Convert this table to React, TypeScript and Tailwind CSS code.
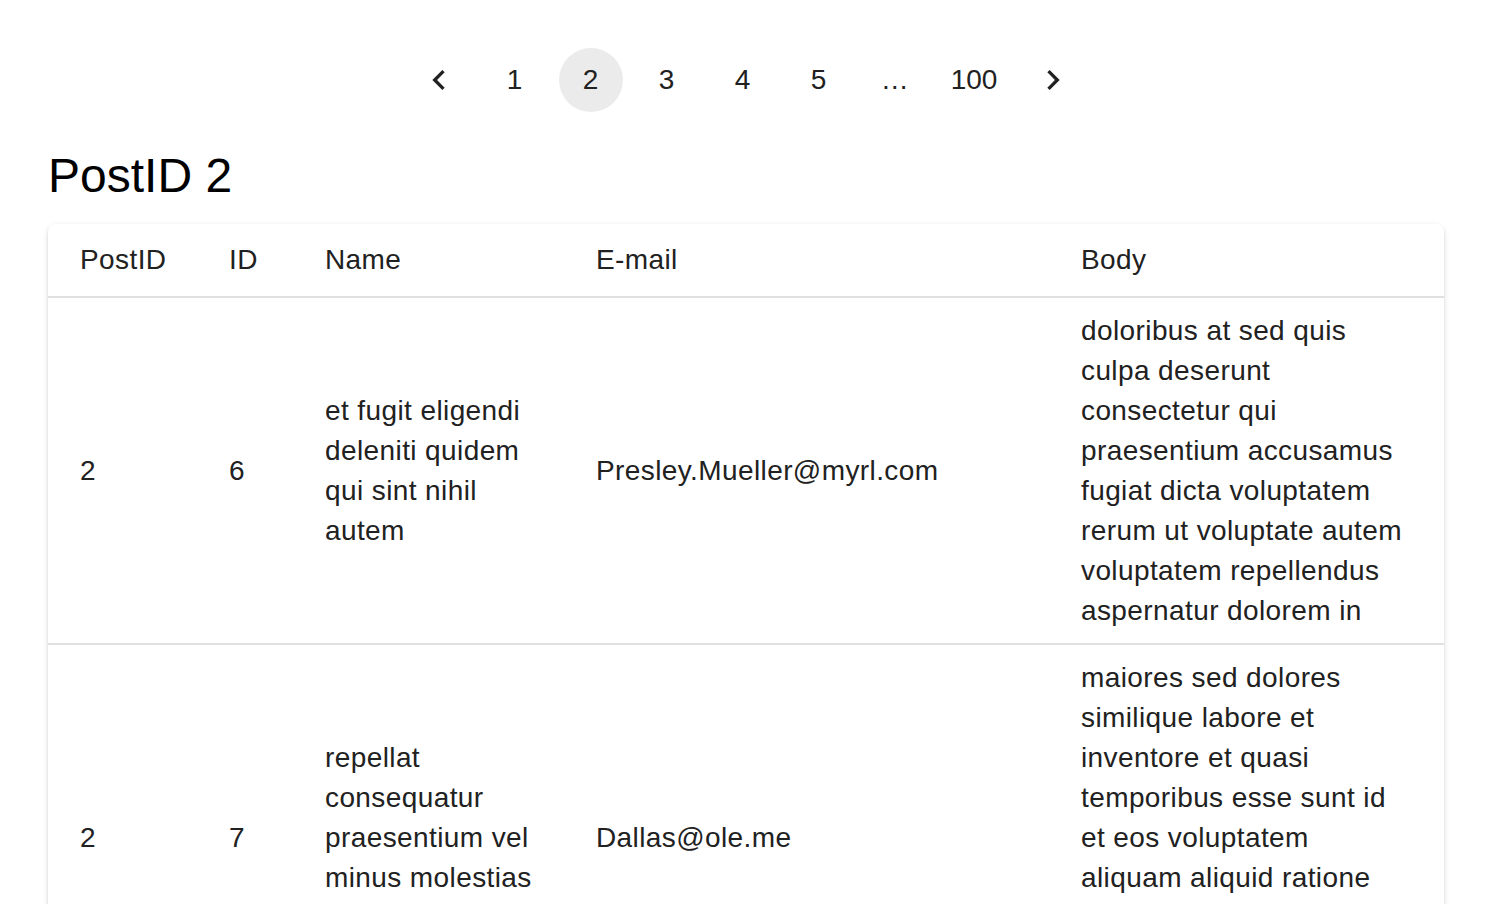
import { useState } from "react";

type Comment = {
  postId: number;
  id: number;
  name: string;
  email: string;
  body: string;
};

const COMMENTS: Comment[] = [
  {
    postId: 2,
    id: 6,
    name: "et fugit eligendi deleniti quidem qui sint nihil autem",
    email: "Presley.Mueller@myrl.com",
    body: "doloribus at sed quis culpa deserunt consectetur qui praesentium accusamus fugiat dicta voluptatem rerum ut voluptate autem voluptatem repellendus aspernatur dolorem in",
  },
  {
    postId: 2,
    id: 7,
    name: "repellat consequatur praesentium vel minus molestias voluptatum",
    email: "Dallas@ole.me",
    body: "maiores sed dolores similique labore et inventore et quasi temporibus esse sunt id et eos voluptatem aliquam aliquid ratione corporis molestiae mollitia quia et magnam dolor",
  },
  {
    postId: 2,
    id: 8,
    name: "et omnis dolorem",
    email: "Mallory_Kunze@marie.org",
    body: "ut voluptatem corrupti velit ad voluptatem maiores et nisi velit vero accusamus maiores voluptates quia aliquid ullam eaque",
  },
  {
    postId: 2,
    id: 9,
    name: "provident id voluptas",
    email: "Meghan_Littel@rene.us",
    body: "sapiente assumenda molestiae atque adipisci laborum distinctio aperiam et ab ut omnis et occaecati aspernatur odit sit rem expedita quas enim ipsam minus",
  },
  {
    postId: 2,
    id: 10,
    name: "eaque et deleniti atque tenetur ut quo ut",
    email: "Carmen_Keeling@caroline.name",
    body: "voluptate iusto quis nobis reprehenderit ipsum amet nulla quia quas dolores velit et ut quibusdam et aut laudantium ut odit",
  },
];

const PAGES: (number | "...")[] = [1, 2, 3, 4, 5, "...", 100];

function Chevron({ dir }: { dir: "left" | "right" }) {
  return (
    <svg viewBox="0 0 24 24" className="w-10 h-10 fill-[#212121]">
      {dir === "left" ? (
        <path d="M15.41 7.41 14 6l-6 6 6 6 1.41-1.41L10.83 12z" />
      ) : (
        <path d="M10 6 8.59 7.41 13.17 12l-4.58 4.59L10 18l6-6z" />
      )}
    </svg>
  );
}

function Pagination({ page, setPage }: { page: number; setPage: (p: number) => void }) {
  return (
    <nav className="flex justify-center">
      <ul className="flex items-center">
        <li>
          <button
            onClick={() => setPage(Math.max(1, page - 1))}
            className="mx-[6px] w-16 h-16 rounded-full flex items-center justify-center"
          >
            <Chevron dir="left" />
          </button>
        </li>
        {PAGES.map((p, i) => (
          <li key={i}>
            {p === "..." ? (
              <div className="mx-[6px] min-w-16 h-16 flex items-center justify-center text-[28px] text-[#212121]">
                …
              </div>
            ) : (
              <button
                onClick={() => setPage(p)}
                className={`mx-[6px] min-w-16 h-16 px-3 rounded-full flex items-center justify-center text-[28px] text-[#212121] ${
                  p === page ? "bg-[#ebebeb]" : ""
                }`}
              >
                {p}
              </button>
            )}
          </li>
        ))}
        <li>
          <button
            onClick={() => setPage(Math.min(100, page + 1))}
            className="mx-[6px] w-16 h-16 rounded-full flex items-center justify-center"
          >
            <Chevron dir="right" />
          </button>
        </li>
      </ul>
    </nav>
  );
}

export default function App() {
  const [page, setPage] = useState(2);

  return (
    <div className="min-h-screen bg-white px-12 pt-12 font-['Liberation_Sans',Arial,sans-serif]">
      <Pagination page={page} setPage={setPage} />

      <h1 className="mt-8 mb-4 text-[48px] leading-[64px] text-black">PostID {page}</h1>

      <div className="bg-white rounded-lg shadow-[0_4px_2px_-2px_rgba(0,0,0,0.2),0_2px_2px_0_rgba(0,0,0,0.14),0_2px_6px_0_rgba(0,0,0,0.12)] overflow-hidden">
        <table className="w-full table-fixed border-collapse text-[28px] leading-[40px] tracking-[0.4px] text-[#212121]">
          <colgroup>
            <col className="w-[149px]" />
            <col className="w-[96px]" />
            <col className="w-[271px]" />
            <col className="w-[485px]" />
            <col />
          </colgroup>
          <thead>
            <tr className="border-b-2 border-[#e0e0e0]">
              <th className="px-8 pt-4 pb-4 text-left font-normal">PostID</th>
              <th className="px-8 pt-4 pb-4 text-left font-normal">ID</th>
              <th className="px-8 pt-4 pb-4 text-left font-normal">Name</th>
              <th className="px-8 pt-4 pb-4 text-left font-normal">E-mail</th>
              <th className="px-8 pt-4 pb-4 text-left font-normal">Body</th>
            </tr>
          </thead>
          <tbody>
            {COMMENTS.map((c) => (
              <tr key={c.id} className="border-b-2 border-[#e0e0e0]">
                <td className="px-8 pt-[13px] pb-3 align-middle">{c.postId}</td>
                <td className="px-8 pt-[13px] pb-3 align-middle">{c.id}</td>
                <td className="px-8 pt-[13px] pb-3 align-middle">{c.name}</td>
                <td className="px-8 pt-[13px] pb-3 align-middle break-words">{c.email}</td>
                <td className="px-8 pt-[13px] pb-3 align-middle">{c.body}</td>
              </tr>
            ))}
          </tbody>
        </table>
      </div>
    </div>
  );
}
